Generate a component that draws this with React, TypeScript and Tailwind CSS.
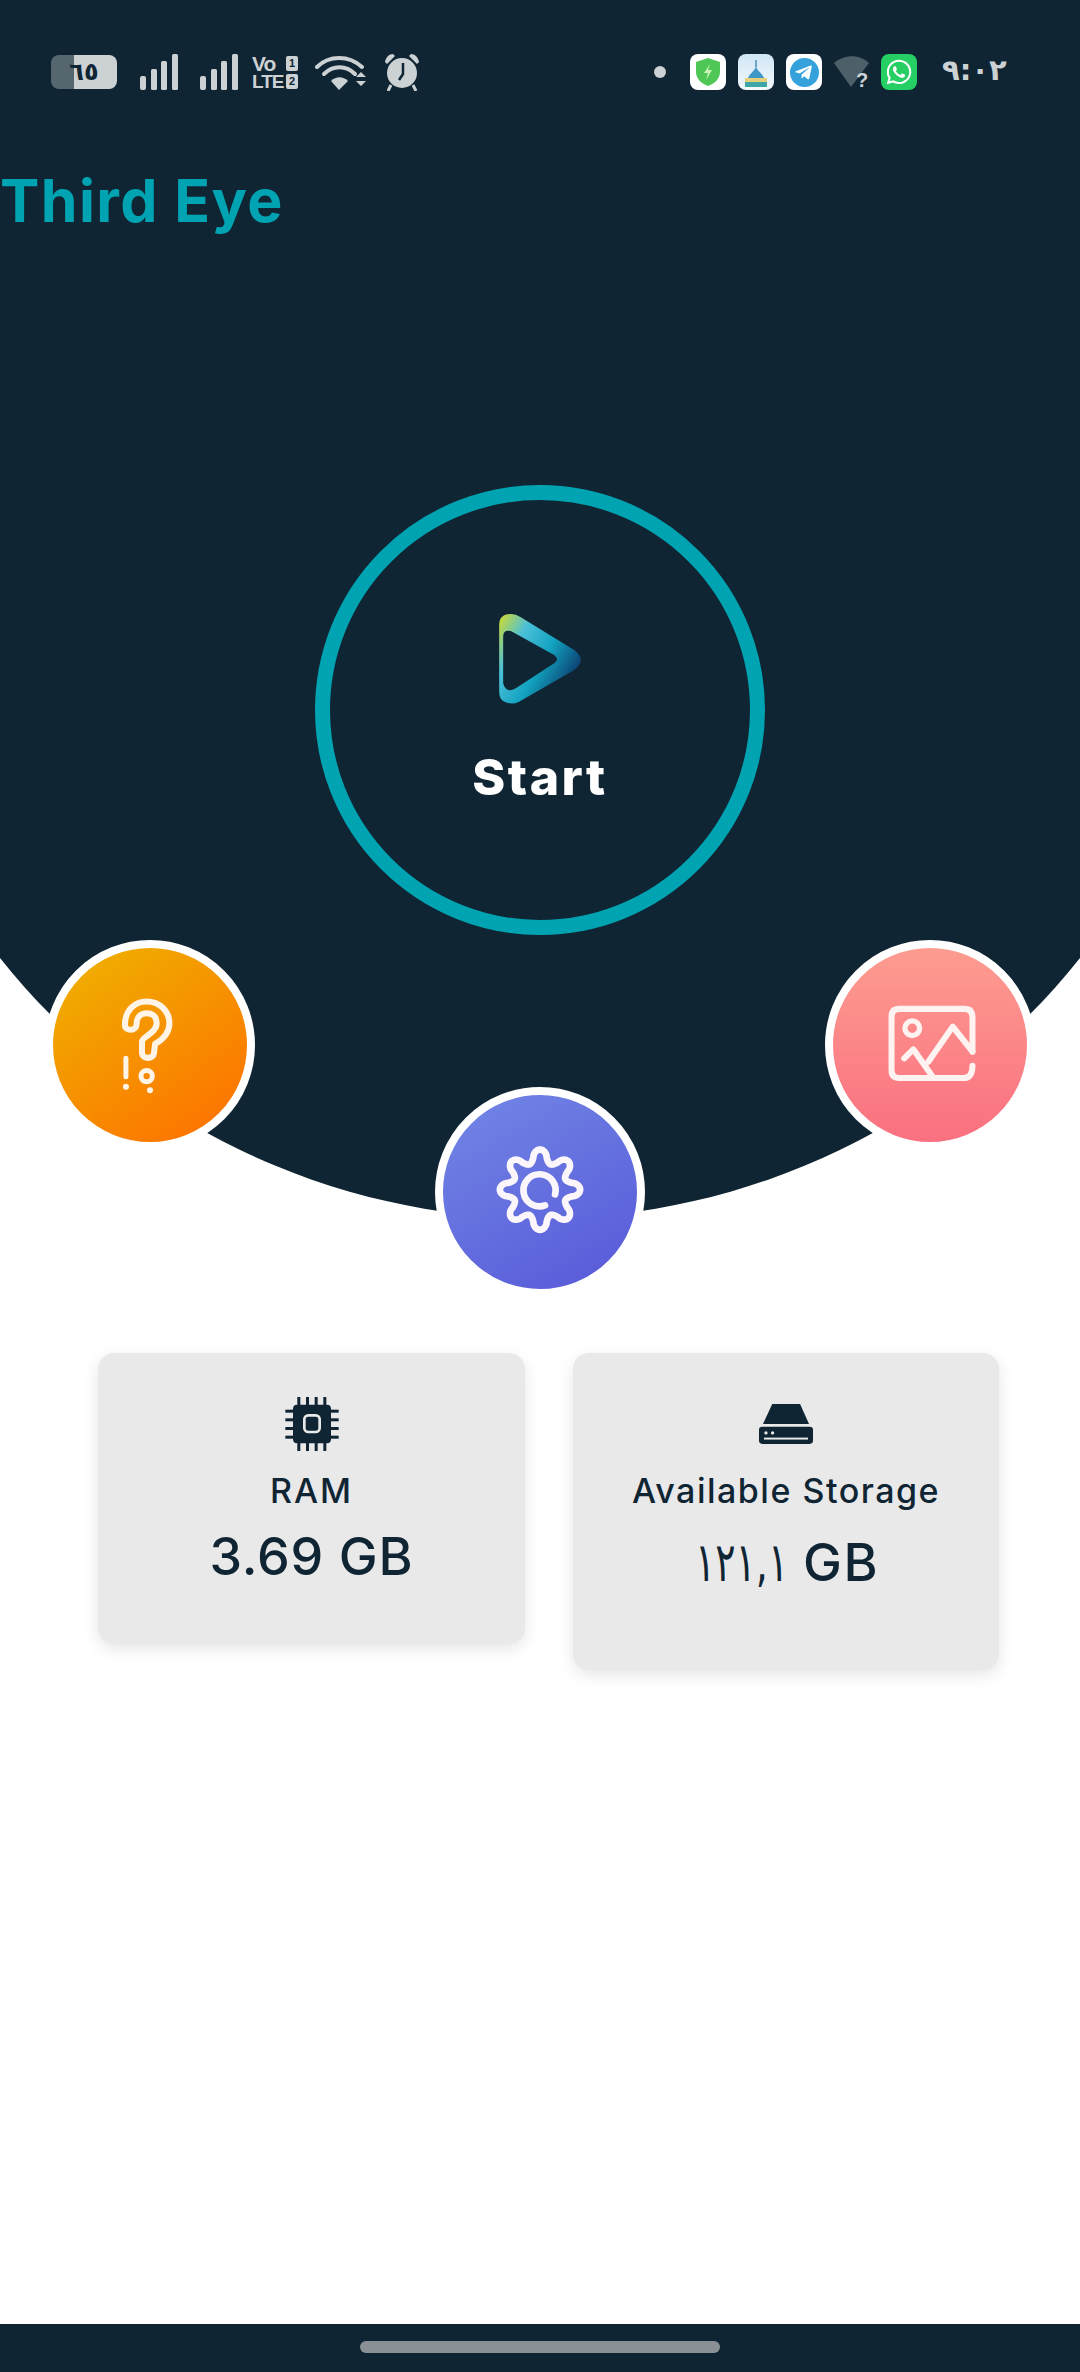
import { FaTelegramPlane, FaWhatsapp } from 'react-icons/fa';

const gearPath = () => {
  const points: string[] = [];
  for (let i = 0; i < 240; i++) {
    const a = (i / 240) * Math.PI * 2;
    const wave = Math.cos(a * 8);
    const r = 101 + 19 * Math.sign(wave) * Math.pow(Math.abs(wave), 0.7);
    points.push(`${(390 + r * Math.sin(a)).toFixed(1)} ${(358 - r * Math.cos(a)).toFixed(1)}`);
  }
  return `M${points.join('L')}Z`;
};

const SignalBars = () => (
  <svg width="38" height="36" viewBox="0 0 38 36" fill="#ccd1d4">
    <rect x="0" y="22" width="6" height="14" rx="2" />
    <rect x="11" y="15" width="6" height="21" rx="1.5" />
    <rect x="21" y="7" width="6" height="29" rx="1.5" />
    <rect x="32" y="0" width="6" height="36" rx="1.5" />
  </svg>
);

const StatusBar = () => (
  <div className="flex items-center h-[36px] mt-[54px] pl-[51px] text-[#ccd1d4]">
    <div className="w-[66px] h-[34px] rounded-[8px] flex items-center justify-center bg-[linear-gradient(90deg,#55666e_35%,#ccd1d4_35%)] text-[#0f2533] text-[24px] font-bold font-['DejaVu_Sans',sans-serif] leading-none">
      ٦٥
    </div>
    <div className="ml-[23px]">
      <SignalBars />
    </div>
    <div className="ml-[22px]">
      <SignalBars />
    </div>
    <div className="ml-[14px] w-[46px] font-['Liberation_Sans',sans-serif] font-bold leading-none">
      <div className="flex justify-between items-center h-[18px] text-[21px] tracking-[-1px]">
        <span>Vo</span>
        <span className="bg-[#ccd1d4] text-[#0f2533] text-[11px] w-[12px] h-[15px] rounded-[2px] flex items-center justify-center tracking-normal">
          1
        </span>
      </div>
      <div className="flex justify-between items-center h-[18px] text-[19px] tracking-[-1px]">
        <span>LTE</span>
        <span className="bg-[#ccd1d4] text-[#0f2533] text-[11px] w-[12px] h-[15px] rounded-[2px] flex items-center justify-center tracking-normal">
          2
        </span>
      </div>
    </div>
    <svg className="ml-[17px]" width="52" height="38" viewBox="0 0 52 38" fill="none" stroke="#ccd1d4" strokeLinecap="round">
      <path d="M2 14C14 2 34 2 47 14" strokeWidth="4" />
      <path d="M9 21C18 12 31 12 40 21" strokeWidth="4" />
      <path d="M16 28L24 37L33 28C28 23 21 23 16 28Z" fill="#ccd1d4" stroke="none" />
      <path d="M41 24L46 19L51 24ZM41 28L46 33L51 28Z" fill="#ccd1d4" stroke="none" />
    </svg>
    <svg className="ml-[16px]" width="38" height="38" viewBox="0 0 38 38">
      <circle cx="19" cy="20" r="15" fill="#ccd1d4" />
      <path d="M2 9C3 4 6 1 10 1L12 3L4 11ZM36 9C35 4 32 1 28 1L26 3L34 11Z" fill="#ccd1d4" />
      <path d="M8 32L5 38M30 32L33 38" stroke="#ccd1d4" strokeWidth="3" />
      <path d="M20 10V21L16 27" stroke="#0f2533" strokeWidth="2.5" fill="none" />
    </svg>
    <div className="ml-auto flex items-center pr-[78px]">
      <div className="w-[12px] h-[12px] rounded-full bg-[#ccd1d4] mr-[24px]" />
      <div className="w-[36px] h-[36px] rounded-[8px] bg-white flex items-center justify-center">
        <svg width="26" height="30" viewBox="0 0 26 30">
          <path d="M13 1L25 5V15C25 22 19 27 13 29C7 27 1 22 1 15V5Z" fill="#4ec756" />
          <path d="M15 7L9 16H13L11 23L17 13H13Z" fill="#c9f5b8" />
        </svg>
      </div>
      <div className="ml-[12px] w-[36px] h-[36px] rounded-[8px] bg-[linear-gradient(180deg,#cfe6f5,#f4f8fb)] flex items-end justify-center overflow-hidden">
        <svg width="28" height="32" viewBox="0 0 28 32">
          <path d="M14 2V9" stroke="#4d8fb5" strokeWidth="1.5" />
          <path d="M14 8C15 14 22 15 23 24H5C6 15 13 14 14 8Z" fill="#3f97c4" />
          <rect x="3" y="20" width="22" height="4" fill="#e4cf7b" />
          <rect x="3" y="24" width="22" height="5" fill="#3fa6a8" />
        </svg>
      </div>
      <div className="ml-[12px] w-[36px] h-[36px] rounded-[8px] bg-white flex items-center justify-center">
        <div className="w-[29px] h-[29px] rounded-full bg-[#36a2dc] flex items-center justify-center">
          <FaTelegramPlane className="text-white text-[19px] -ml-[2px]" />
        </div>
      </div>
      <svg className="ml-[12px]" width="36" height="36" viewBox="0 0 36 36">
        <path d="M0 9C10 0 26 0 35 9L17 33Z" fill="#4d5f68" />
        <text x="22" y="33" fill="#ccd1d4" fontSize="20" fontWeight="700" fontFamily="Liberation Sans, sans-serif">
          ?
        </text>
      </svg>
      <div className="ml-[11px] w-[36px] h-[36px] rounded-[8px] bg-[#25cf63] flex items-center justify-center">
        <FaWhatsapp className="text-white text-[28px]" />
      </div>
      <div className="ml-[25px] w-[60px] text-[29px] leading-none text-[#ccd1d4] font-bold font-['DejaVu_Sans',sans-serif] tracking-[-1px] -mt-[4px]" dir="ltr">
        ٩:٠٢
      </div>
    </div>
  </div>
);

const PlayLogo = () => (
  <svg width="82" height="90" viewBox="590 432 245 270">
    <defs>
      <linearGradient id="play" x1="0" y1="0" x2="1" y2="0.62">
        <stop offset="0" stopColor="#d6dc28" />
        <stop offset="0.3" stopColor="#4cc0d8" />
        <stop offset="0.62" stopColor="#12a3c0" />
        <stop offset="1" stopColor="#0b3a6c" />
      </linearGradient>
    </defs>
    <path
      fill="url(#play)"
      fillRule="evenodd"
      d="M590 465Q590 432 625 432Q640 432 655 442L815 540Q835 555 835 570Q833 590 810 603L650 695Q630 705 610 697Q590 690 590 665ZM602 500Q602 478 625 483L755 555Q772 568 755 580L640 655Q610 672 602 640Z"
    />
  </svg>
);

const StartButton = () => (
  <div className="mt-[249px] mx-auto w-[450px] h-[450px] rounded-full border-[15px] border-[#00a3b1] flex flex-col items-center">
    <div className="mt-[114px]">
      <PlayLogo />
    </div>
    <div className="mt-[38px] text-white text-[50px] leading-[70px] font-extrabold font-['Inter',sans-serif] tracking-[2.5px]">
      Start
    </div>
  </div>
);

const HelpButton = () => (
  <div className="w-[210px] h-[210px] shrink-0 rounded-full border-8 border-white bg-[linear-gradient(145deg,#eeb400,#ff6d00)]">
    <svg className="w-full h-full" viewBox="160 85 580 580" fill="none" stroke="#fff4e6" strokeLinecap="round" strokeLinejoin="round">
      <path
        strokeWidth="18"
        d="M375 315C375 270 405 245 440 245C480 245 508 275 508 310C508 340 490 358 465 372L462 400C460 418 428 418 426 400V365C426 350 470 340 470 310C470 290 458 280 440 280C422 280 410 292 410 312C410 335 375 335 375 315Z"
      />
      <path strokeWidth="15" d="M378 415V470" />
      <circle cx="378" cy="500" r="9" fill="#fff4e6" stroke="none" />
      <circle cx="440" cy="468" r="17" strokeWidth="15" />
      <circle cx="450" cy="510" r="9" fill="#fff4e6" stroke="none" />
    </svg>
  </div>
);

const SettingsButton = () => (
  <div className="mt-[147px] w-[210px] h-[210px] shrink-0 rounded-full border-8 border-white bg-[linear-gradient(150deg,#7287e6,#5758d8)]">
    <svg className="w-full h-full" viewBox="100 75 580 580" fill="none" stroke="#fbf6fb" strokeWidth="20" strokeLinecap="round" strokeLinejoin="round">
      <path d={gearPath()} />
      <path d="M435 372A48 48 0 1 0 405 405" />
    </svg>
  </div>
);

const GalleryButton = () => (
  <div className="w-[210px] h-[210px] shrink-0 rounded-full border-8 border-white bg-[linear-gradient(180deg,#fd9c90,#fa7080)]">
    <svg className="w-full h-full" viewBox="100 85 580 580" fill="none" stroke="#fff3f1" strokeWidth="18" strokeLinecap="round" strokeLinejoin="round">
      <path d="M517 395V292Q517 267 492 267H298Q275 267 275 290V450Q275 474 298 474H490Q517 474 517 437" />
      <circle cx="337" cy="325" r="22" strokeWidth="16" />
      <path d="M313 415L340 388L398 470" />
      <path d="M385 425L458 320L517 395" />
    </svg>
  </div>
);

const ChipIcon = () => (
  <svg width="54" height="54" viewBox="613 200 160 162" fill="#102533">
    {[653, 679, 705, 731].map((x) => (
      <rect key={x} x={x - 4} y="200" width="9" height="162" />
    ))}
    {[242, 268, 294, 320].map((y) => (
      <rect key={y} x="613" y={y - 4} width="160" height="9" />
    ))}
    <rect x="636" y="223" width="114" height="116" rx="12" />
    <rect x="670" y="255" width="46" height="50" rx="12" fill="none" stroke="#e9e9ea" strokeWidth="8" />
  </svg>
);

const DriveIcon = () => (
  <svg width="54" height="40" viewBox="597 222 163 120">
    <path d="M637 222H721L748 282H609Z" fill="#102533" />
    <rect x="597" y="290" width="163" height="52" rx="10" fill="#102533" />
    <circle cx="618" cy="309" r="5" fill="#e9e9ea" />
    <circle cx="638" cy="309" r="5" fill="#e9e9ea" />
    <rect x="612" y="323" width="133" height="6" fill="#e9e9ea" />
  </svg>
);

export default function App() {
  return (
    <div className="min-h-[2372px] flex flex-col bg-white font-['Inter',sans-serif] text-[#102533]">
      <div className="h-[1219px] shrink-0 flex flex-col bg-[#0f2533] [clip-path:path('M0_0H1080V958A690_690_0_0_1_0_958Z')]">
        <StatusBar />
        <h1 className="mt-[76px] h-[70px] text-[59px] leading-[70px] font-bold text-[#00a3b1] tracking-[1.4px]">
          Third Eye
        </h1>
        <StartButton />
      </div>

      <div className="relative z-10 -mt-[279px] px-[45px] flex items-start justify-between">
        <HelpButton />
        <SettingsButton />
        <GalleryButton />
      </div>

      <div className="mt-[56px] pl-[98px] pr-[81px] flex items-start justify-between">
        <div className="w-[427px] h-[291px] rounded-[16px] bg-[#e9e9ea] shadow-[0_5px_16px_rgba(0,0,0,0.1)] flex flex-col items-center pt-[44px]">
          <ChipIcon />
          <div className="mt-[18px] text-[34px] leading-[44px] font-[550] tracking-[2px]">RAM</div>
          <div className="mt-[13px] text-[52px] leading-[62px] font-[550] tracking-[0.8px]">3.69 GB</div>
        </div>
        <div className="w-[426px] h-[317px] rounded-[16px] bg-[#e9e9ea] shadow-[0_5px_16px_rgba(0,0,0,0.1)] flex flex-col items-center pt-[44px]">
          <div className="h-[54px] flex items-center">
            <DriveIcon />
          </div>
          <div className="mt-[18px] text-[34px] leading-[44px] font-[550] tracking-[1.5px]">Available Storage</div>
          <div className="mt-[19px] text-[52px] leading-[62px] font-[550] tracking-[1.5px] flex items-baseline gap-[15px]" dir="ltr">
            <span className="-ml-[38px] origin-right scale-x-[0.7] font-['DejaVu_Sans',sans-serif] text-[54px] font-normal tracking-[-3px]">
              ١٢١,١
            </span>
            <span>GB</span>
          </div>
        </div>
      </div>

      <div className="mt-auto h-[48px] bg-[#0f2533] flex items-center justify-center">
        <div className="w-[360px] h-[12px] rounded-full bg-[#8a9196] -mt-[3px]" />
      </div>
    </div>
  );
}
